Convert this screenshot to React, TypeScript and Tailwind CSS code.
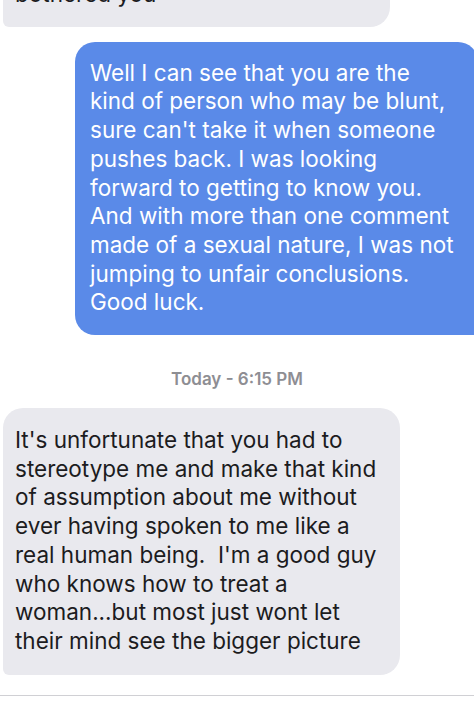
const blueLines = [
  'Well I can see that you are the',
  'kind of person who may be blunt,',
  "sure can't take it when someone",
  'pushes back. I was looking',
  'forward to getting to know you.',
  'And with more than one comment',
  'made of a sexual nature, I was not',
  'jumping to unfair conclusions.',
  'Good luck.',
]

const grayLines = [
  "It's unfortunate that you had to",
  'stereotype me and make that kind',
  'of assumption about me without',
  'ever having spoken to me like a',
  "real human being.  I'm a good guy",
  'who knows how to treat a',
  'woman...but most just wont let',
  'their mind see the bigger picture',
]

function Lines({ lines }: { lines: string[] }) {
  return (
    <>
      {lines.map((line, i) => (
        <span key={i} className="block whitespace-pre">
          {line}
        </span>
      ))}
    </>
  )
}

export default function App() {
  return (
    <div
      className="w-[474px] h-[722px] overflow-hidden bg-white flex flex-col"
      style={{ fontFamily: 'Inter, "Noto Sans", sans-serif' }}
    >
      <div className="mt-[-38px] ml-[3px] w-[387px] rounded-[20px] rounded-bl-[6px] bg-[#e9e9ee] pl-[12px] pt-[18px] pb-[18px] text-[22.5px] leading-[28.7px] text-[#1c1c1e]">
        bothered you
      </div>

      <div className="mt-[15px] ml-[75px] mr-[-4px] rounded-[20px] rounded-br-[4px] bg-[#5a8ae8] pl-[15px] pt-[17px] pb-[18px] text-[22.5px] leading-[28.7px] text-white">
        <Lines lines={blueLines} />
      </div>

      <div className="mt-[33px] text-center text-[17px] leading-[22px] font-semibold text-[#8e8e93]">
        Today - 6:15 PM
      </div>

      <div className="mt-[18px] ml-[3px] w-[397px] rounded-[20px] rounded-bl-[6px] bg-[#e9e9ee] pl-[12px] pt-[18px] pb-[19px] text-[22.5px] leading-[28.7px] text-[#1c1c1e]">
        <Lines lines={grayLines} />
      </div>

      <div className="mt-[20px] h-px bg-[#d0d0d4]" />
    </div>
  )
}
